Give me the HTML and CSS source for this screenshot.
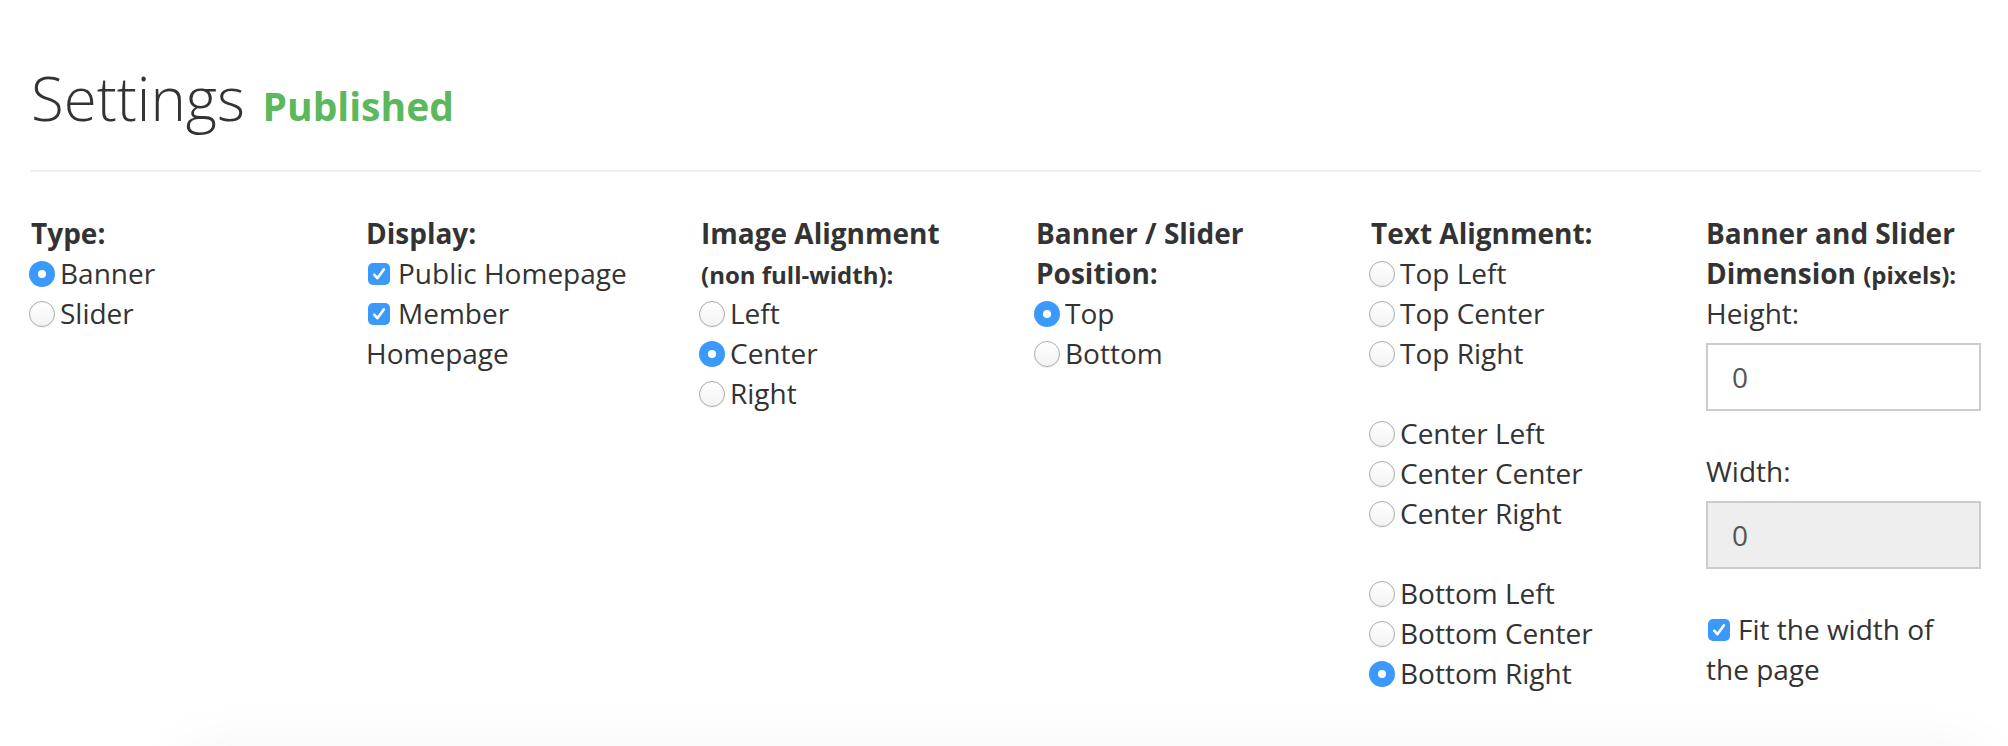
FILE: index.html
```html
<!DOCTYPE html>
<html lang="en">
<head>
<meta charset="utf-8">
<title>Settings</title>
<link rel="stylesheet" href="styles.css">
</head>
<body>
<div class="page">
  <h1 class="title">Settings <span class="status">Published</span></h1>
  <hr class="rule">
  <div class="settings-grid">
    <div class="col">
      <div class="label">Type:</div>
      <div class="opt"><span class="radio on"></span>Banner</div>
      <div class="opt"><span class="radio"></span>Slider</div>
    </div>
    <div class="col">
      <div class="label">Display:</div>
      <div class="opt"><span class="check"><svg viewBox="0 0 22 22"><path d="M6.2 11.6 L9.4 15.2 L15.8 6.4"/></svg></span>Public Homepage</div>
      <div class="opt"><span class="check"><svg viewBox="0 0 22 22"><path d="M6.2 11.6 L9.4 15.2 L15.8 6.4"/></svg></span>Member Homepage</div>
    </div>
    <div class="col">
      <div class="label">Image Alignment <small>(non full-width):</small></div>
      <div class="opt"><span class="radio"></span>Left</div>
      <div class="opt"><span class="radio on"></span>Center</div>
      <div class="opt"><span class="radio"></span>Right</div>
    </div>
    <div class="col">
      <div class="label">Banner / Slider Position:</div>
      <div class="opt"><span class="radio on"></span>Top</div>
      <div class="opt"><span class="radio"></span>Bottom</div>
    </div>
    <div class="col">
      <div class="label">Text Alignment:</div>
      <div class="group">
        <div class="opt"><span class="radio"></span>Top Left</div>
        <div class="opt"><span class="radio"></span>Top Center</div>
        <div class="opt"><span class="radio"></span>Top Right</div>
      </div>
      <div class="group">
        <div class="opt"><span class="radio"></span>Center Left</div>
        <div class="opt"><span class="radio"></span>Center Center</div>
        <div class="opt"><span class="radio"></span>Center Right</div>
      </div>
      <div class="group">
        <div class="opt"><span class="radio"></span>Bottom Left</div>
        <div class="opt"><span class="radio"></span>Bottom Center</div>
        <div class="opt"><span class="radio on"></span>Bottom Right</div>
      </div>
    </div>
    <div class="col">
      <div class="label">Banner and Slider Dimension <small>(pixels):</small></div>
      <div class="field">
        <div class="field-label">Height:</div>
        <div class="input">0</div>
      </div>
      <div class="field">
        <div class="field-label">Width:</div>
        <div class="input disabled">0</div>
      </div>
      <div class="opt"><span class="check"><svg viewBox="0 0 22 22"><path d="M6.2 11.6 L9.4 15.2 L15.8 6.4"/></svg></span>Fit the width of the page</div>
    </div>
  </div>
  <div class="panel-below"></div>
</div>
</body>
</html>
```

FILE: styles.css
```css
html, body {
  margin: 0;
  padding: 0;
  background: #fff;
}

body {
  font-family: "Open Sans", "Noto Sans", "Liberation Sans", sans-serif;
  font-size: 28px;
  line-height: 40px;
  color: #333;
  overflow: hidden;
}

.page {
  padding: 0 27px 0 31px;
}

.title {
  margin: 58px 0 0;
  font-size: 60px;
  line-height: 80px;
  font-weight: 300;
  color: #333;
}

.status {
  font-size: 39px;
  font-weight: 700;
  color: #5cb85c;
  margin-left: 2px;
}

.rule {
  margin: 24px 0 0;
  border: 0;
  border-top: 2px solid #eee;
  height: 0;
}

.settings-grid {
  display: grid;
  grid-template-columns: repeat(6, 275px);
  column-gap: 60px;
  margin-top: 41px;
}

.label {
  font-weight: 700;
}

.label small {
  font-size: 24px;
  line-height: 20px;
  font-weight: 700;
}

.group + .group {
  margin-top: 40px;
}

.radio {
  display: inline-block;
  box-sizing: border-box;
  width: 26px;
  height: 26px;
  border-radius: 50%;
  border: 1.5px solid #acacac;
  background: linear-gradient(#ffffff, #f3f3f3);
  box-shadow: 0 1px 1px rgba(0, 0, 0, 0.06);
  vertical-align: middle;
  position: relative;
  top: -3px;
  margin: 0 5px 0 -2px;
}

.radio.on {
  border: 0;
  background: #3b99fc;
  box-shadow: none;
}

.radio.on::after {
  content: "";
  position: absolute;
  left: 9px;
  top: 9px;
  width: 8px;
  height: 8px;
  border-radius: 50%;
  background: #fff;
}

.check {
  display: inline-block;
  width: 22px;
  height: 22px;
  border-radius: 5px;
  background: #3b99fc;
  vertical-align: middle;
  position: relative;
  top: -3px;
  margin: 0 8px 0 2px;
}

.check svg {
  display: block;
  width: 22px;
  height: 22px;
  fill: none;
  stroke: #fff;
  stroke-width: 2.6;
  stroke-linecap: round;
  stroke-linejoin: round;
}

.field {
  margin-bottom: 40px;
}

.field-label {
  margin-bottom: 10px;
}

.input {
  box-sizing: border-box;
  height: 68px;
  border: 2px solid #ccc;
  background: #fff;
  padding: 0 24px;
  display: flex;
  align-items: center;
  color: #555;
}

.input.disabled {
  background: #eee;
}

.panel-below {
  margin: 70px 0 0 150px;
  height: 200px;
  background: #fff;
  box-shadow: 0 -10px 60px rgba(0, 0, 0, 0.05);
}
```
